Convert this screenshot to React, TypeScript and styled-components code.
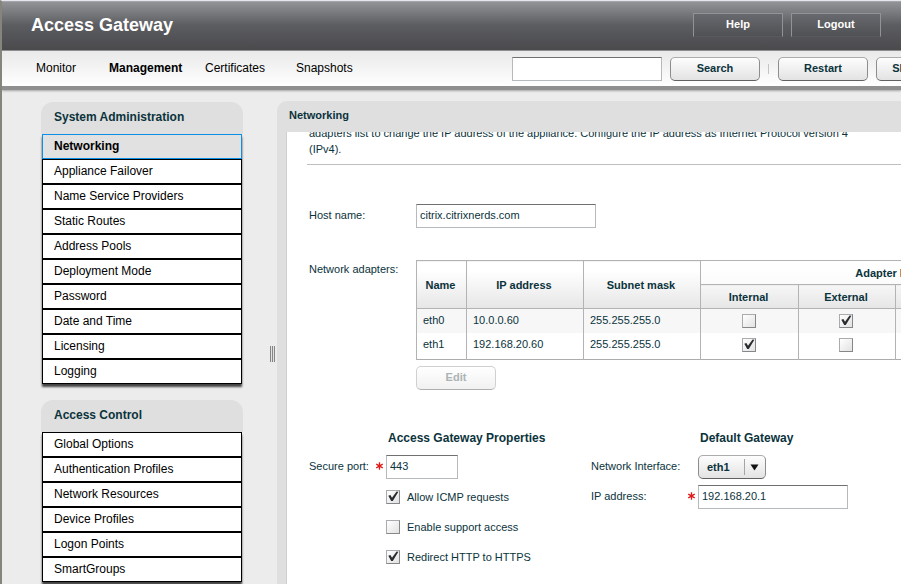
import React, { useId, useState } from "react";
import styled, { createGlobalStyle, css } from "styled-components";

const ink = "#0b333c";

const GlobalStyle = createGlobalStyle`
  *, *::before, *::after { box-sizing: border-box; }
  body {
    margin: 0;
    background: #ececec;
    color: ${ink};
    font: 11px/16px "Liberation Sans", Arial, sans-serif;
  }
  button, input, select { font: inherit; color: inherit; margin: 0; }
`;

const Page = styled.div`
  display: flex;
  flex-direction: column;
  height: 100vh;
  overflow: hidden;
  border-left: 2px solid #85857c;
  border-top: 1px solid #e4e8ee;
`;

const Header = styled.header`
  flex: none;
  display: flex;
  align-items: center;
  justify-content: space-between;
  height: 50px;
  padding: 0 20px 2px 29px;
  border-top: 1px solid #a4a5a9;
  border-bottom: 1px solid #8e8e90;
  background: linear-gradient(#929397, #5c5d61 48%, #4a4a4d);
`;

const Title = styled.h1`
  margin: 0;
  color: #fff;
  font-size: 18px;
  line-height: 24px;
`;

const HeaderActions = styled.div`
  display: flex;
  gap: 8px;
`;

const HeaderButton = styled.button`
  width: 90px;
  height: 24px;
  padding: 0 0 2px;
  border: 1px solid #929398;
  border-bottom-color: #58595c;
  background: linear-gradient(#68696e, #505154);
  color: #fff;
  font-weight: bold;
`;

const NavBar = styled.div`
  flex: none;
  display: flex;
  align-items: center;
  height: 35px;
  background: linear-gradient(#e9e9e9, #fff);
  box-shadow: 0 4px 0 #8f8f8f, 0 5px 2px #a4a4a4;
`;

const Nav = styled.nav`
  flex: none;
  display: grid;
  grid-template-columns: 73px 96px 91px 216px;
  padding: 0 0 2px 34px;
`;

const NavLink = styled.a<{ $active?: boolean }>`
  color: #000;
  font-size: 12px;
  font-weight: ${(p) => (p.$active ? "bold" : "normal")};
  text-decoration: none;
`;

const Tools = styled.div`
  flex: none;
  display: flex;
  align-items: center;
  gap: 8px;
`;

const TextBox = styled.input<{ $width: number }>`
  width: ${(p) => p.$width}px;
  height: 24px;
  padding: 0 3px 2px;
  border: 1px solid #b7babc;
  border-top-color: #6f7071;
  border-radius: 0;
  background: #fff;
  outline: none;
`;

const raised = css`
  height: 24px;
  border: 1px solid #8b8d8f;
  border-top-color: #aaacae;
  border-bottom-color: #5f6162;
  border-radius: 5px;
  background: linear-gradient(#fdfdfd, #e3e3e3);
  font-weight: bold;
`;

const Button = styled.button<{ $width?: number }>`
  ${raised}
  flex: none;
  width: ${(p) => p.$width ?? 90}px;
  padding: 0 0 2px;
  &:disabled {
    border-color: #cfd0d1;
    border-bottom-color: #adafb0;
    background: linear-gradient(#fff, #f1f1f1);
    color: #aab3b3;
  }
`;

const Divider = styled.span`
  width: 2px;
  height: 10px;
  border-left: 1px solid #c4c4c4;
`;

const Body = styled.div`
  flex: 1;
  min-height: 0;
  display: flex;
  padding: 16px 0 0 39px;
`;

const Sidebar = styled.aside`
  flex: none;
  display: flex;
  flex-direction: column;
  gap: 16px;
  width: 202px;
`;

const MenuPanel = styled.section`
  padding: 0 1px;
  border-radius: 12px 12px 0 0;
  background: linear-gradient(#dfdfdf 32px, transparent 32px);
  flex: none;
`;

const MenuTitle = styled.h2`
  margin: 0;
  padding: 7px 12px 9px;
  font-size: 12px;
  line-height: 16px;
`;

const MenuList = styled.ul`
  margin: 0;
  padding: 0;
  list-style: none;
  box-shadow: 0 3px 2px #444;
`;

const MenuLink = styled.a<{ $active?: boolean }>`
  display: block;
  height: 25px;
  padding: 3px 11px;
  border: 1px solid ${(p) => (p.$active ? "#0d8fe8" : "#000")};
  background: ${(p) => (p.$active ? "#e1e1e1" : "#fff")};
  color: #000;
  font-size: 12px;
  line-height: 16px;
  font-weight: ${(p) => (p.$active ? "bold" : "normal")};
  text-decoration: none;
`;

const Splitter = styled.div`
  flex: none;
  display: flex;
  justify-content: flex-end;
  width: 34px;
  padding: 244px 2px 0 0;
`;

const Grip = styled.span`
  width: 5px;
  height: 16px;
  background: repeating-linear-gradient(90deg, #858585 0 1px, #e2e2e2 1px 2px);
`;

const Main = styled.main`
  flex: 1;
  min-width: 0;
  display: flex;
  flex-direction: column;
  margin-top: -1px;
  padding-left: 10px;
  border-radius: 10px 0 0 0;
  background: #dfdfdf;
`;

const MainTitle = styled.h2`
  margin: 0;
  padding: 6px 2px 9px;
  font-size: 11px;
  line-height: 16px;
`;

const Content = styled.div`
  flex: 1;
  min-height: 0;
  overflow: hidden;
  padding-left: 20px;
  background: #fff;
  box-shadow: -1px 0 0 #cfcfcf;
`;

const Intro = styled.p`
  max-width: 562px;
  margin: -7px 0 0;
  padding: 0 2px 7px;
`;

const Rule = styled.hr`
  margin: 0 0 39px;
  border: 0;
  border-top: 1px solid #bdbfc0;
`;

const FormRow = styled.div<{ $tall?: boolean }>`
  display: flex;
  align-items: ${(p) => (p.$tall ? "flex-start" : "center")};
  margin-bottom: ${(p) => (p.$tall ? 37 : 32)}px;
  padding-left: 2px;
`;

const RowLabel = styled.label<{ $top?: boolean }>`
  flex: none;
  width: 107px;
  padding-top: ${(p) => (p.$top ? 1 : 0)}px;
  padding-bottom: ${(p) => (p.$top ? 0 : 2)}px;
`;

const AdapterBox = styled.div`
  flex: none;
  display: flex;
  flex-direction: column;
  align-items: flex-start;
  gap: 6px;
`;

const AdapterTable = styled.table`
  width: 670px;
  table-layout: fixed;
  border-collapse: collapse;
  border-bottom: 1px solid #aaacae;
  tbody tr:nth-child(odd) { background: #f7f7f7; }
  tbody tr:last-child td { height: 27px; padding-bottom: 4px; }
`;

const HeadCell = styled.th<{ $tone?: "top" | "bottom" }>`
  height: 24px;
  padding: 0 2px 0 0;
  border: 1px solid #b1b3b5;
  white-space: nowrap;
  background: ${(p) =>
    p.$tone === "top"
      ? "linear-gradient(#fff, #fbfbfb)"
      : p.$tone === "bottom"
        ? "linear-gradient(#f6f6f6, #e6e6e6)"
        : "linear-gradient(#fff 20%, #e6e6e6)"};
`;

const Cell = styled.td<{ $center?: boolean }>`
  height: 24px;
  padding: ${(p) => (p.$center ? "0 2px 1px 0" : "0 6px 1px")};
  border: solid #b1b3b5;
  border-width: 0 1px;
  text-align: ${(p) => (p.$center ? "center" : "left")};
`;

const CheckFrame = styled.span`
  display: inline-grid;
  width: 14px;
  height: 14px;
  vertical-align: middle;
  > * { grid-area: 1 / 1; }
`;

const CheckInput = styled.input`
  appearance: none;
  width: 14px;
  height: 14px;
  border: 1px solid #85878a;
  border-top-color: #a9abae;
  border-left-color: #a9abae;
  background: linear-gradient(135deg, #fff, #e2e2e2);
  & + svg { visibility: hidden; pointer-events: none; }
  &:checked + svg { visibility: visible; }
`;

const Groups = styled.div`
  display: flex;
  padding-left: 2px;
`;

const Group = styled.section<{ $label: number }>`
  flex: none;
  display: grid;
  grid-template-columns: ${(p) => p.$label}px auto;
  grid-template-rows: 22px;
  grid-auto-rows: 24px;
  row-gap: 6px;
  align-content: start;
  align-items: center;
  width: 282px;
`;

const GroupTitle = styled.h3`
  grid-column: 2;
  margin: 0;
  padding-left: 2px;
  font-size: 12px;
  line-height: 16px;
`;

const FieldLabel = styled.label`
  display: flex;
  align-items: center;
  justify-content: space-between;
  padding: 0 3px 2px 0;
`;

const CheckLabel = styled.label`
  grid-column: 2;
  display: flex;
  align-items: center;
  gap: 7px;
`;

const SelectBox = styled.span`
  display: inline-grid;
  align-items: center;
  width: 68px;
  > * { grid-area: 1 / 1; }
  > svg { justify-self: end; pointer-events: none; }
`;

const Select = styled.select`
  ${raised}
  appearance: none;
  width: 100%;
  padding: 0 24px 0 8px;
`;

function Checkbox({ initial = false, id, label }: { initial?: boolean; id?: string; label?: string }) {
  const [on, setOn] = useState(initial);
  return (
    <CheckFrame>
      <CheckInput type="checkbox" id={id} aria-label={label} checked={on} onChange={() => setOn(!on)} />
      <svg width="14" height="14" viewBox="0 0 14 14" aria-hidden="true">
        <path d="M2.3 5.8 4.4 5 6 7.8 10.6 1.6 12.4 1.8 6.8 11 5.2 11Z" fill="#2a2d30" />
      </svg>
    </CheckFrame>
  );
}

function Required() {
  return (
    <svg width="7" height="8" viewBox="0 0 7 8" aria-hidden="true" stroke="#e01818" strokeWidth="1.3">
      <path d="M3.5 0.3v7.4M0.3 2.1l6.4 3.8M6.7 2.1l-6.4 3.8" fill="none" />
    </svg>
  );
}

function Menu({ title, items, active }: { title: string; items: string[]; active?: string }) {
  return (
    <MenuPanel>
      <MenuTitle>{title}</MenuTitle>
      <MenuList>
        {items.map((item) => (
          <li key={item}>
            <MenuLink href="#" $active={item === active}>{item}</MenuLink>
          </li>
        ))}
      </MenuList>
    </MenuPanel>
  );
}

function CheckOption({ text, initial }: { text: string; initial?: boolean }) {
  const id = useId();
  return (
    <CheckLabel htmlFor={id}>
      <Checkbox id={id} initial={initial} />
      {text}
    </CheckLabel>
  );
}

const tabs = ["Monitor", "Management", "Certificates", "Snapshots"];

const systemItems = [
  "Networking", "Appliance Failover", "Name Service Providers", "Static Routes", "Address Pools",
  "Deployment Mode", "Password", "Date and Time", "Licensing", "Logging",
];

const accessItems = [
  "Global Options", "Authentication Profiles", "Network Resources", "Device Profiles", "Logon Points", "SmartGroups",
];

const roles = ["Internal", "External", "Appliance failover", "Management"];

const adapters = [
  { name: "eth0", ip: "10.0.0.60", mask: "255.255.255.0", roles: [false, true, false, false] },
  { name: "eth1", ip: "192.168.20.60", mask: "255.255.255.0", roles: [true, false, false, false] },
];

const columnWidths = [50, 117, 117, 98, 97, 112, 79];

const Col = styled.col<{ $width: number }>`
  width: ${(p) => p.$width}px;
`;

export default function App() {
  return (
    <Page>
      <GlobalStyle />
      <Header>
        <Title>Access Gateway</Title>
        <HeaderActions>
          <HeaderButton type="button">Help</HeaderButton>
          <HeaderButton type="button">Logout</HeaderButton>
        </HeaderActions>
      </Header>
      <NavBar>
        <Nav>
          {tabs.map((tab) => (
            <NavLink key={tab} href="#" $active={tab === "Management"}>{tab}</NavLink>
          ))}
        </Nav>
        <Tools>
          <TextBox $width={150} type="text" aria-label="Search" />
          <Button type="button">Search</Button>
          <Divider />
          <Button type="button">Restart</Button>
          <Button type="button">Shut Down</Button>
        </Tools>
      </NavBar>
      <Body>
        <Sidebar>
          <Menu title="System Administration" items={systemItems} active="Networking" />
          <Menu title="Access Control" items={accessItems} />
        </Sidebar>
        <Splitter><Grip /></Splitter>
        <Main>
          <MainTitle>Networking</MainTitle>
          <Content>
            <Intro>
              adapters list to change the IP address of the appliance. Configure the IP address as
              Internet Protocol version 4 (IPv4).
            </Intro>
            <Rule />
            <FormRow>
              <RowLabel htmlFor="host">Host name:</RowLabel>
              <TextBox id="host" $width={180} type="text" defaultValue="citrix.citrixnerds.com" />
            </FormRow>
            <FormRow $tall>
              <RowLabel as="span" id="adapters" $top>Network adapters:</RowLabel>
              <AdapterBox>
                <AdapterTable aria-labelledby="adapters">
                  <colgroup>
                    {columnWidths.map((w, i) => <Col key={i} $width={w} />)}
                  </colgroup>
                  <thead>
                    <tr>
                      <HeadCell rowSpan={2}>Name</HeadCell>
                      <HeadCell rowSpan={2}>IP address</HeadCell>
                      <HeadCell rowSpan={2}>Subnet mask</HeadCell>
                      <HeadCell colSpan={4} $tone="top">Adapter Roles</HeadCell>
                    </tr>
                    <tr>
                      {roles.map((role) => <HeadCell key={role} $tone="bottom">{role}</HeadCell>)}
                    </tr>
                  </thead>
                  <tbody>
                    {adapters.map((a) => (
                      <tr key={a.name}>
                        <Cell>{a.name}</Cell>
                        <Cell>{a.ip}</Cell>
                        <Cell>{a.mask}</Cell>
                        {a.roles.map((on, i) => (
                          <Cell key={roles[i]} $center>
                            <Checkbox initial={on} label={`${a.name} ${roles[i]}`} />
                          </Cell>
                        ))}
                      </tr>
                    ))}
                  </tbody>
                </AdapterTable>
                <Button type="button" $width={80} disabled>Edit</Button>
              </AdapterBox>
            </FormRow>
            <Groups>
              <Group $label={77}>
                <GroupTitle>Access Gateway Properties</GroupTitle>
                <FieldLabel htmlFor="port">Secure port:<Required /></FieldLabel>
                <TextBox id="port" $width={72} type="text" defaultValue="443" required />
                <CheckOption text="Allow ICMP requests" initial />
                <CheckOption text="Enable support access" />
                <CheckOption text="Redirect HTTP to HTTPS" initial />
              </Group>
              <Group $label={107}>
                <GroupTitle>Default Gateway</GroupTitle>
                <FieldLabel htmlFor="iface">Network Interface:</FieldLabel>
                <SelectBox>
                  <Select id="iface" defaultValue="eth1">
                    <option>eth0</option>
                    <option>eth1</option>
                  </Select>
                  <svg width="23" height="18" viewBox="0 0 23 18" aria-hidden="true">
                    <path d="M1.5 1v16" stroke="#a3a5a7" />
                    <path d="M7.5 6.5h8l-4 6z" fill="#111" />
                  </svg>
                </SelectBox>
                <FieldLabel htmlFor="gateway">IP address:<Required /></FieldLabel>
                <TextBox id="gateway" $width={150} type="text" defaultValue="192.168.20.1" required />
              </Group>
            </Groups>
          </Content>
        </Main>
      </Body>
    </Page>
  );
}
